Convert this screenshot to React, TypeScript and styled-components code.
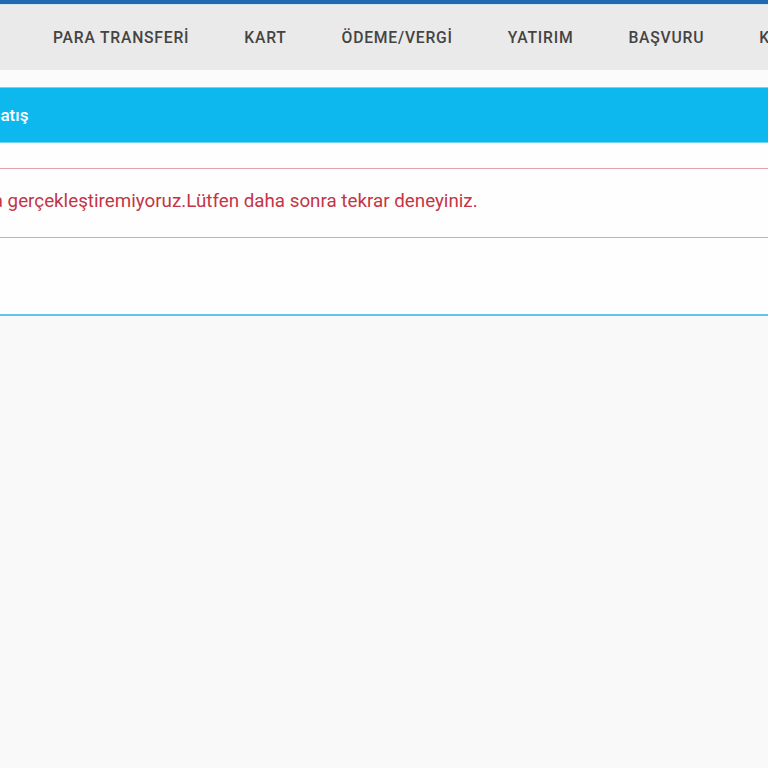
import styled, { createGlobalStyle } from "styled-components";

const GlobalStyle = createGlobalStyle`
  html, body {
    margin: 0;
    padding: 0;
    background: #f9f9f9;
    font-family: Roboto, "Noto Sans", "Liberation Sans", sans-serif;
  }
`;

// the page is scrolled sideways in the screenshot
const SCROLL_X = 300;

const Viewport = styled.div`
  width: 768px;
  height: 768px;
  overflow: hidden;
  background: #f9f9f9;
`;

const Page = styled.div`
  width: 1400px;
  margin-left: -${SCROLL_X}px;
`;

const TopStrip = styled.div`
  height: 4px;
  background: #1f69b1;
  border-bottom: 1px solid #cfe2f2;
`;

const NavBar = styled.nav`
  height: 65px;
  background: #ebeaea;
  display: flex;
  align-items: center;
  padding-left: ${SCROLL_X + 25.5}px;
`;

const NavItem = styled.a`
  padding: 0 27.5px;
  font-size: 15.7px;
  font-weight: 500;
  letter-spacing: 0.78px;
  color: #444444;
  text-decoration: none;
  white-space: nowrap;
`;

const Gap = styled.div`
  height: 17px;
  background: #fbfbfb;
`;

const PanelHeader = styled.div`
  height: 54px;
  background: #0cb8ee;
  border-top: 1px solid #6fd3f4;
  border-bottom: 1px solid #6fd3f4;
  display: flex;
  align-items: center;
  padding-left: ${SCROLL_X - 91.5}px;
  color: #ffffff;
  font-size: 17px;
  font-weight: 500;
`;

const PanelBody = styled.div`
  height: 173px;
  background: #fefefe;
  border-bottom: 2px solid #5cc5ea;
  padding-top: 25px;
  box-sizing: border-box;
`;

const Alert = styled.div`
  height: 70px;
  box-sizing: border-box;
  border-top: 1px solid #e6a1aa;
  border-bottom: 1px solid #e6a1aa;
  background: #fefefe;
  display: flex;
  align-items: center;
  padding-left: ${SCROLL_X - 147}px;
  padding-bottom: 4px;
  color: #c43545;
  font-size: 18.8px;
  white-space: nowrap;
`;

const navItems = [
  "PARA TRANSFERİ",
  "KART",
  "ÖDEME/VERGİ",
  "YATIRIM",
  "BAŞVURU",
  "KREDİ",
];

export default function App() {
  return (
    <>
      <GlobalStyle />
      <Viewport>
        <Page>
          <TopStrip />
          <NavBar>
            {navItems.map((item) => (
              <NavItem key={item} href="#">
                {item}
              </NavItem>
            ))}
          </NavBar>
          <Gap />
          <PanelHeader>Döviz Alış/Satış</PanelHeader>
          <PanelBody>
            <Alert>
              İşleminizi şu anda gerçekleştiremiyoruz.Lütfen daha sonra tekrar deneyiniz.
            </Alert>
          </PanelBody>
        </Page>
      </Viewport>
    </>
  );
}
